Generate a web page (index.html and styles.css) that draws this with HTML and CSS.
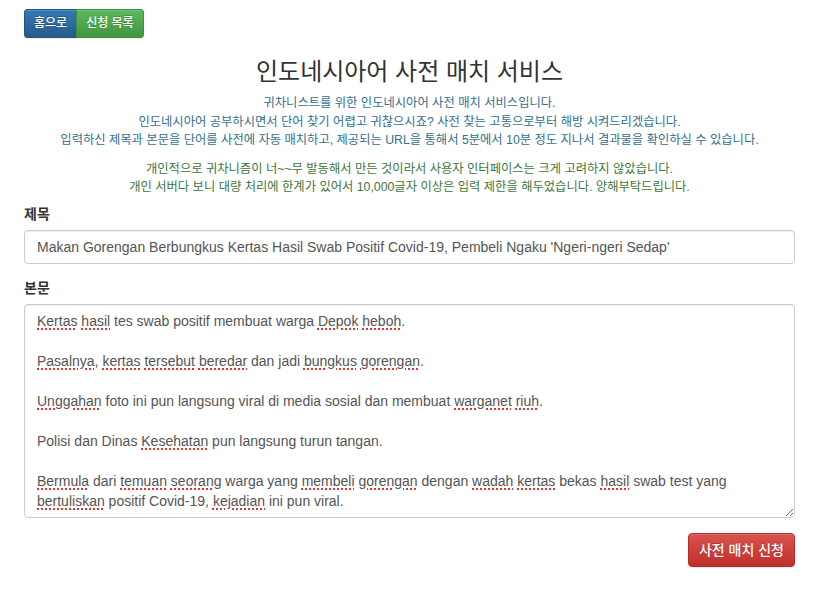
FILE: index.html
```html
<!DOCTYPE html>
<html lang="ko">
 <head>
  <meta charset="utf-8">
  <title>인도네시아어 사전 매치 서비스</title>
  <link rel="stylesheet" href="styles.css">
 </head>
 <body>
  <div class="container">
   <div class="btn-group">
    <a class="btn btn-sm btn-primary" href="#">홈으로</a><a class="btn btn-sm btn-success" href="#">신청 목록</a>
   </div>

   <h3 class="title">인도네시아어 사전 매치 서비스</h3>
   <p class="text-info">
    귀차니스트를 위한 인도네시아어 사전 매치 서비스입니다.<br>
    인도네시아어 공부하시면서 단어 찾기 어렵고 귀찮으시죠? 사전 찾는 고통으로부터 해방 시켜드리겠습니다.<br>
    입력하신 제목과 본문을 단어를 사전에 자동 매치하고, 제공되는 URL을 통해서 5분에서 10분 정도 지나서 결과물을 확인하실 수 있습니다.
   </p>
   <p class="text-success">
    개인적으로 귀차니즘이 너~~무 발동해서 만든 것이라서 사용자 인터페이스는 크게 고려하지 않았습니다.<br>
    개인 서버다 보니 대량 처리에 한계가 있어서 10,000글자 이상은 입력 제한을 해두었습니다. 양해부탁드립니다.
   </p>

   <form class="apply-form">
    <div class="form-group">
     <label for="title">제목</label>
     <input class="form-control" id="title" type="text" value="Makan Gorengan Berbungkus Kertas Hasil Swab Positif Covid-19, Pembeli Ngaku 'Ngeri-ngeri Sedap'">
    </div>
    <div class="form-group">
     <label>본문</label>
     <div class="form-control body-text"><span class="sp">Kertas</span> <span class="sp">hasil</span> tes swab positif membuat warga <span class="sp">Depok</span> <span class="sp">heboh</span>.<br>
<br>
<span class="sp">Pasalnya</span>, <span class="sp">kertas</span> <span class="sp">tersebut</span> <span class="sp">beredar</span> dan jadi <span class="sp">bungkus</span> <span class="sp">gorengan</span>.<br>
<br>
<span class="sp">Unggahan</span> foto ini pun langsung viral di media sosial dan membuat <span class="sp">warganet</span> <span class="sp">riuh</span>.<br>
<br>
Polisi dan Dinas <span class="sp">Kesehatan</span> pun langsung turun tangan.<br>
<br>
<span class="sp">Bermula</span> dari <span class="sp">temuan</span> <span class="sp">seorang</span> warga yang <span class="sp">membeli</span> <span class="sp">gorengan</span> dengan <span class="sp">wadah</span> <span class="sp">kertas</span> bekas <span class="sp">hasil</span> swab test yang <span class="sp">bertuliskan</span> positif Covid-19, <span class="sp">kejadian</span> ini pun viral.</div>
    </div>
    <div class="form-actions">
     <button class="btn btn-danger" type="button">사전 매치 신청</button>
    </div>
   </form>
  </div>
 </body>
</html>
```

FILE: styles.css
```css
body {
    margin: 0;
    font-family: "Liberation Sans", "Noto Sans CJK KR", sans-serif;
    font-size: 14px;
    line-height: 1.42857;
    color: #333;
    background: #fff;
}
.container {
    padding: 9px 26px 20px 24px;
}

.btn-group {
    display: flex;
}
.btn {
    display: inline-block;
    padding: 6px 10px;
    font-family: inherit;
    font-size: 14px;
    font-weight: 500;
    line-height: 20px;
    color: #fff;
    text-decoration: none;
    border: 1px solid transparent;
    border-radius: 4px;
    text-shadow: 0 -1px 0 rgba(0, 0, 0, 0.2);
    box-shadow: inset 0 1px 0 rgba(255, 255, 255, 0.15), 0 1px 1px rgba(0, 0, 0, 0.075);
    cursor: pointer;
}
.btn-sm {
    padding: 4px 9px;
    font-size: 12px;
    line-height: 19px;
    border-radius: 3px;
}
.btn-group .btn:first-child { border-top-right-radius: 0; border-bottom-right-radius: 0; }
.btn-group .btn:last-child { border-top-left-radius: 0; border-bottom-left-radius: 0; margin-left: -1px; }
.btn-primary {
    background-image: linear-gradient(to bottom, #337ab7 0, #265a88 100%);
    border-color: #245580;
}
.btn-success {
    background-image: linear-gradient(to bottom, #5cb85c 0, #419641 100%);
    border-color: #3e8f3e;
}
.btn-danger {
    background-image: linear-gradient(to bottom, #d9534f 0, #c12e2a 100%);
    border-color: #b92c28;
}

.title {
    margin: 21px 0 9px;
    font-size: 24px;
    font-weight: 400;
    line-height: 1.1;
    text-align: center;
}
.text-info, .text-success {
    margin: 0 0 10px;
    font-size: 12.3px;
    line-height: 18.5px;
    text-align: center;
}
.text-info { color: #31708f; }
.text-success { color: #3c763d; margin-bottom: 0; }

.apply-form {
    margin-top: 8px;
}
.form-group {
    margin-bottom: 15px;
}
.form-group label {
    display: block;
    margin-bottom: 5px;
    font-weight: bold;
}
.form-control {
    display: block;
    box-sizing: border-box;
    width: 100%;
    height: 34px;
    padding: 6px 12px;
    font-family: inherit;
    font-size: 14px;
    line-height: 20px;
    color: #555;
    background: #fff;
    border: 1px solid #ccc;
    border-radius: 4px;
    box-shadow: inset 0 1px 1px rgba(0, 0, 0, 0.075);
}
.body-text {
    height: 214px;
    overflow: auto;
    resize: vertical;
}
.sp {
    text-decoration: underline dotted #e0342f;
    text-decoration-thickness: 2px;
    text-underline-offset: 3px;
}
.form-actions {
    display: flex;
    justify-content: flex-end;
}
```
